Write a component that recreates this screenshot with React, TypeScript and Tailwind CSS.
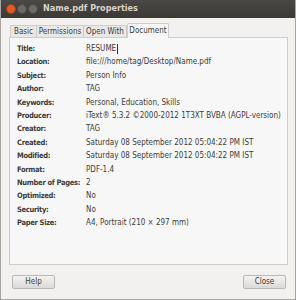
import React from "react";

const rows: [string, string][] = [
  ["Title:", "RESUME"],
  ["Location:", "file:///home/tag/Desktop/Name.pdf"],
  ["Subject:", "Person Info"],
  ["Author:", "TAG"],
  ["Keywords:", "Personal, Education, Skills"],
  ["Producer:", "iText® 5.3.2 ©2000-2012 1T3XT BVBA (AGPL-version)"],
  ["Creator:", "TAG"],
  ["Created:", "Saturday 08 September 2012 05:04:22 PM IST"],
  ["Modified:", "Saturday 08 September 2012 05:04:22 PM IST"],
  ["Format:", "PDF-1.4"],
  ["Number of Pages:", "2"],
  ["Optimized:", "No"],
  ["Security:", "No"],
  ["Paper Size:", "A4, Portrait (210 × 297 mm)"],
];

export default function App() {
  return (
    <div
      className="w-[296px] h-[300px] flex flex-col bg-[#f2f1f0] border-x border-b border-[#a8a6a3] overflow-hidden"
      style={{ fontFamily: '"DejaVu Sans Condensed", "DejaVu Sans", sans-serif' }}
    >
      {/* title bar */}
      <div className="h-[18px] shrink-0 flex items-center bg-gradient-to-b from-[#4a4945] to-[#3a3935] pl-[5px]">
        <div className="flex items-center gap-[1px]">
          <div className="w-[10px] h-[10px] rounded-full bg-[#e25a28] border border-[#a8401a]" />
          <div className="w-[10px] h-[10px] rounded-full bg-[#6b6a66] border border-[#4a4945]" />
          <div className="w-[10px] h-[10px] rounded-full bg-[#6b6a66] border border-[#4a4945]" />
        </div>
        <div className="ml-[5px] text-[9px] font-bold text-[#d8d4cc]">Name.pdf Properties</div>
      </div>

      <div className="flex-1 flex flex-col pl-[8px] pr-[7px] pt-[5px] pb-[10px]">
        {/* tabs */}
        <div className="flex items-end h-[14px] text-[8px] text-[#3c3c3c] relative z-10 pl-px">
          <div className="h-[12px] w-[27px] flex items-center justify-center bg-[#e9e8e6] border border-[#cfcdca] border-b-0">Basic</div>
          <div className="h-[12px] w-[47px] flex items-center justify-center bg-[#e9e8e6] border border-[#cfcdca] border-b-0 border-l-0">Permissions</div>
          <div className="h-[12px] w-[43px] flex items-center justify-center bg-[#e9e8e6] border border-[#cfcdca] border-b-0 border-l-0">Open With</div>
          <div className="h-[15px] w-[42px] -mb-px flex items-center justify-center bg-[#f7f7f7] border border-[#cfcdca] border-b-0 rounded-t-[2px]">Document</div>
        </div>
        {/* panel */}
        <div className="flex-1 bg-[#f7f7f7] border border-[#cfcdca] pl-[7px] pt-[4px]">
          <div className="grid grid-cols-[69px_1fr] leading-[13.4px] text-[8px] text-[#3c3c3c]">
            {rows.map(([k, v]) => (
              <React.Fragment key={k}>
                <div className="font-bold whitespace-nowrap text-[7.5px] tracking-[-0.3px]">{k}</div>
                <div className="flex items-center whitespace-nowrap">
                  {v}
                  {k === "Title:" && <span className="inline-block w-px h-[10px] bg-[#333] ml-px" />}
                </div>
              </React.Fragment>
            ))}
          </div>
        </div>
        {/* buttons */}
        <div className="flex justify-between mt-[10px] pl-[3px] pr-[2px]">
          <button className="w-[43px] h-[14px] text-[8px] text-[#3c3c3c] bg-gradient-to-b from-[#f4f3f2] to-[#dcdad8] border border-[#bab8b5] rounded-[2px] flex items-center justify-center">Help</button>
          <button className="w-[43px] h-[14px] text-[8px] text-[#3c3c3c] bg-gradient-to-b from-[#f4f3f2] to-[#dcdad8] border border-[#bab8b5] rounded-[2px] flex items-center justify-center">Close</button>
        </div>
      </div>
    </div>
  );
}
